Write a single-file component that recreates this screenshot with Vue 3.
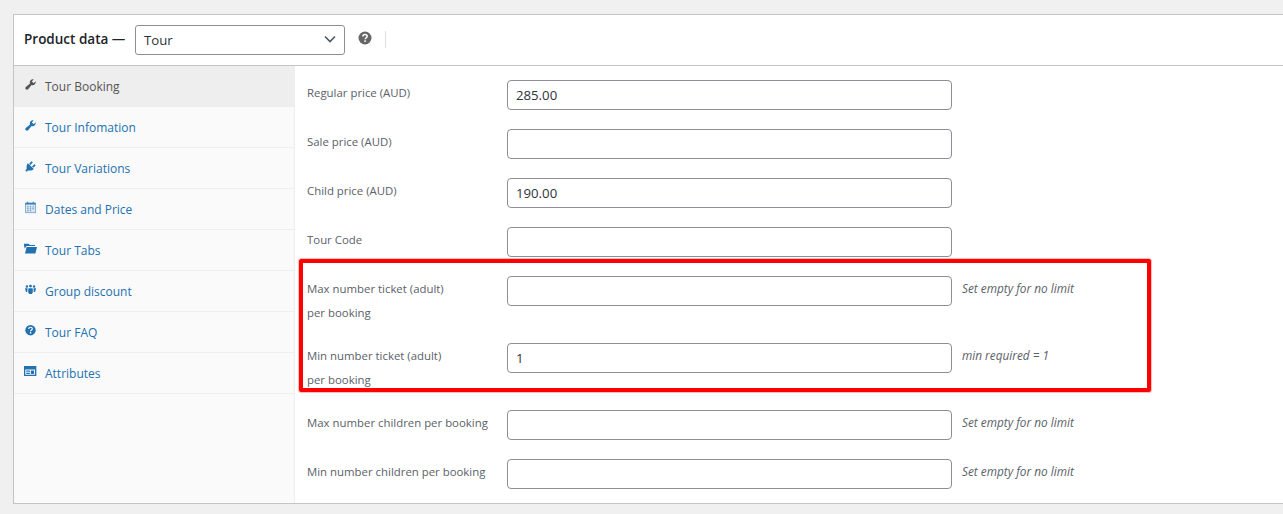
<script setup>
const tabs = [
  { label: 'Tour Booking', icon: 'wrench', active: true },
  { label: 'Tour Infomation', icon: 'wrench' },
  { label: 'Tour Variations', icon: 'plug' },
  { label: 'Dates and Price', icon: 'calendar' },
  { label: 'Tour Tabs', icon: 'folder' },
  { label: 'Group discount', icon: 'group' },
  { label: 'Tour FAQ', icon: 'help' },
  { label: 'Attributes', icon: 'card' },
]
const rows = [
  { label: 'Regular price (AUD)', value: '285.00' },
  { label: 'Sale price (AUD)', value: '' },
  { label: 'Child price (AUD)', value: '190.00' },
  { label: 'Tour Code', value: '' },
  { label: ['Max number ticket (adult)', 'per booking'], value: '', hint: 'Set empty for no limit' },
  { label: ['Min number ticket (adult)', 'per booking'], value: '1', hint: 'min required = 1' },
  { label: 'Max number children per booking', value: '', hint: 'Set empty for no limit' },
  { label: 'Min number children per booking', value: '', hint: 'Set empty for no limit' },
]
</script>

<template>
  <div class="page">
    <section class="panel">
      <header class="head">
        <span class="title">Product data —</span>
        <div class="select">
          <span>Tour</span>
          <svg class="chevron" viewBox="0 0 12 8" width="12" height="8"><path d="M1 1.500l5 5 5-5" fill="none" stroke="#50575e" stroke-width="1.600" /></svg>
        </div>
        <svg class="tip" viewBox="0 0 14 14" width="14" height="14">
          <circle cx="7" cy="7" r="6.500" fill="#666" />
          <path d="M4.900 5.400c0-1.300 1-2 2.200-2s2.100.7 2.100 1.800c0 1.600-2 1.500-2 3.100" fill="none" stroke="#fff" stroke-width="1.500" />
          <rect x="6.300" y="9.300" width="1.600" height="1.600" fill="#fff" />
        </svg>
        <span class="divider"></span>
      </header>
      <div class="body">
        <nav class="tabs">
          <a v-for="t in tabs" :key="t.label" class="tab" :class="{ active: t.active }">
            <svg class="ico" viewBox="0 0 20 20" width="13" height="13">
              <path v-if="t.icon === 'wrench'" fill="currentColor" d="M16.68 9.77c-1.34 1.34-3.3 1.67-4.95.99l-5.41 6.52c-.99.99-2.59.99-3.58 0s-.99-2.59 0-3.57l6.52-5.42c-.68-1.65-.35-3.61.99-4.95 1.28-1.28 3.12-1.62 4.72-1.06l-2.89 2.89 2.82 2.82 2.86-2.87c.53 1.58.18 3.39-1.08 4.65z" />
              <path v-else-if="t.icon === 'plug'" fill="currentColor" d="M13.11 4.36L9.87 7.6 8 5.73l3.24-3.24c.35-.34 1.05-.2 1.56.32.52.51.66 1.21.31 1.55zm-8 1.77l.91-1.12 9.01 9.01-1.19.84c-.71.71-2.63 1.16-3.82 1.16H6.14L4.9 17.26c-.59.59-1.54.59-2.12 0-.59-.58-.59-1.53 0-2.12l1.24-1.24v-3.88c0-1.13.4-3.19 1.09-3.89zm7.26 3.97l3.24-3.24c.34-.35 1.04-.21 1.55.31.52.51.66 1.21.31 1.55l-3.24 3.25z" />
              <g v-else-if="t.icon === 'calendar'">
                <rect x="2.500" y="3" width="15" height="15" fill="#dbe7f2" stroke="#6c9cc6" stroke-width="1.200" />
                <rect x="2" y="3" width="16" height="2.500" fill="#3f83bb" />
                <rect x="5" y="1" width="1.600" height="3" fill="#3f83bb" />
                <rect x="13.400" y="1" width="1.600" height="3" fill="#3f83bb" />
                <path d="M5 9h2M9 9h2M13 9h2M5 12h2M9 12h2M13 12h2M5 15h2M9 15h2" stroke="#3f83bb" stroke-width="1.400" />
              </g>
              <path v-else-if="t.icon === 'folder'" fill="currentColor" d="M0 5V2.500h7l2 2h8v1.500H4L1 10zM1.500 17.500L4 7.500H20L17.500 17.500z" />
              <path v-else-if="t.icon === 'group'" fill="currentColor" d="M10 2.500a2.200 2.200 0 110 4.400 2.200 2.200 0 010-4.400zM4.500 3.500a1.900 1.900 0 110 3.800 1.900 1.900 0 010-3.800zM15.500 3.500a1.900 1.900 0 110 3.800 1.900 1.900 0 010-3.800zM7.500 8h5l1 1v5.500l-1.500 2.500H8l-1.500-2.500V9zM1.500 8h4L5 14H3zM14.500 8h4L17 14h-2z" />
              <g v-else-if="t.icon === 'help'">
                <circle cx="10" cy="9.500" r="8" fill="currentColor" />
                <path d="M7.300 7.500c0-1.700 1.300-2.500 2.800-2.500s2.700.9 2.700 2.300c0 2.100-2.700 1.900-2.700 3.900" fill="none" stroke="#fafafa" stroke-width="1.900" />
                <rect x="9" y="12.300" width="2.200" height="2.200" fill="#fafafa" />
              </g>
              <path v-else fill="currentColor" fill-rule="evenodd" d="M0 1.500h19v15.500H0zM2 7v8h15V7zM3.500 8.500h5.500v2H3.500zM3.500 12h5.500v2H3.500zM10.500 8.500h5v5.500h-5z" />
            </svg>
            <span>{{ t.label }}</span>
          </a>
        </nav>
        <div class="content">
          <div v-for="r in rows" :key="r.value + r.label" class="row">
            <div class="label">
              <template v-if="Array.isArray(r.label)">
                <div v-for="l in r.label" :key="l">{{ l }}</div>
              </template>
              <template v-else>{{ r.label }}</template>
            </div>
            <input class="field" type="text" :value="r.value" readonly />
            <em v-if="r.hint" class="hint">{{ r.hint }}</em>
          </div>
          <div class="redbox"></div>
        </div>
      </div>
    </section>
  </div>
</template>

<style>
html, body { margin: 0; background: #f0f0f1; overflow: hidden; }
</style>

<style scoped>
.page {
  padding: 14px 0 0 13px;
  font-family: "Open Sans", "Noto Sans", sans-serif;
  color: #3c434a;
}
.panel {
  height: 490px;
  box-sizing: border-box;
  background: #fff;
  border: 1px solid #c3c4c7;
  border-right: 0;
  display: flex;
  flex-direction: column;
}
.head {
  height: 51px;
  box-sizing: border-box;
  flex: none;
  border-bottom: 1px solid #c3c4c7;
  display: flex;
  align-items: center;
  padding-left: 10px;
}
.title {
  width: 111px;
  font-size: 13.5px;
  font-weight: 600;
  color: #1d2327;
  margin-top: -3px;
}
.select {
  width: 210px;
  height: 30px;
  box-sizing: border-box;
  border: 1px solid #8c8f94;
  border-radius: 3px;
  display: flex;
  align-items: center;
  justify-content: space-between;
  padding: 0 8px;
  font-size: 13.2px;
  color: #2c3338;
}
.chevron { margin-top: -2px; }
.tip { margin: -5px 0 0 13px; }
.divider { width: 1px; height: 17px; background: #ddd; margin: -2px 0 0 13px; }
.body { flex: 1; display: flex; min-height: 0; }
.tabs {
  width: 281px;
  flex: none;
  box-sizing: border-box;
  background: #fafafa;
  border-right: 1px solid #eee;
}
.tab {
  height: 41px;
  box-sizing: border-box;
  border-bottom: 1px solid #eee;
  display: flex;
  align-items: center;
  padding-left: 10px;
  font-size: 12px;
  color: #2271b1;
}
.tab.active { background: #eee; color: #555; border-bottom-color: #eee; }
.ico { flex: none; margin: -4px 8px 0 0; }
.tab span { margin-top: 1px; }
.content {
  flex: 1;
  position: relative;
  padding: 14px 0 0 12px;
  font-size: 11.4px;
}
.row {
  display: flex;
  align-items: flex-start;
  min-height: 31px;
  margin-bottom: 18px;
}
.label {
  width: 200px;
  flex: none;
  line-height: 24px;
  margin-top: 1px;
  color: #5a6168;
  white-space: nowrap;
}
.field {
  width: 445px;
  height: 30px;
  box-sizing: border-box;
  border: 1px solid #8c8f94;
  border-radius: 4px;
  padding: 0 8px;
  margin: 0;
  font: 13.2px "Open Sans", "Noto Sans", sans-serif;
  color: #2c3338;
  background: #fff;
  outline: 0;
}
.hint {
  margin: 0 0 0 10px;
  line-height: 24px;
  font-style: italic;
  color: #5a6168;
  font-size: 11.8px;
}
.redbox {
  position: absolute;
  left: 4px;
  top: 193px;
  width: 852px;
  height: 133px;
  box-sizing: border-box;
  border: 4px solid #f00;
  border-radius: 2px;
  box-shadow: 0 0 0 1px rgba(255, 0, 0, .25);
  pointer-events: none;
}
</style>
